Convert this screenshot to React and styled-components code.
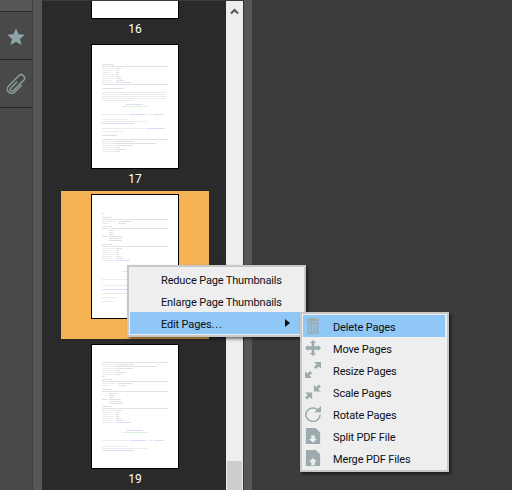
import React from 'react';
import styled, { createGlobalStyle } from 'styled-components';

const GlobalStyle = createGlobalStyle`
  html, body {
    margin: 0;
    height: 100%;
    background: #3c3c3c;
    overflow: hidden;
    font-family: Roboto, "Liberation Sans", Arial, sans-serif;
  }
`;

// rows of a fake page: [x, y, width, colour]
const GREY = '#e0e0e0';
const SOFT = '#ececec';
const RULE = '#e2e2e2';
const LINK = '#dcdcf8';
const GREEN = '#dcf2dc';

const fieldRows = (start, labels, values) =>
  labels.flatMap((w, i) => [
    [10, start + i * 2, w, SOFT],
    [24, start + i * 2, values[i], i === labels.length - 1 ? LINK : GREY],
  ]);

const page17 = [
  [10, 19, 12, GREY], [10, 21, 66, RULE],
  ...fieldRows(23, [13, 12, 8, 13, 14, 12, 10, 12], [5, 3, 3, 3, 5, 6, 8, 15]),
  [10, 39, 66, RULE], [10, 43, 22, GREY],
  [10, 47, 64, SOFT], [10, 49, 64, SOFT], [10, 51, 65, SOFT], [10, 53, 64, SOFT], [10, 55, 32, SOFT],
  [34, 59, 14, LINK], [48, 59, 3, GREY], [30, 61, 26, GREEN],
  [10, 69, 26, SOFT], [37, 69, 17, LINK], [56, 69, 4, SOFT], [61, 69, 11, LINK],
  [10, 74, 25, SOFT], [10, 76, 45, SOFT], [10, 78, 32, LINK],
  [10, 83, 42, SOFT], [53, 83, 20, LINK], [10, 86, 21, SOFT], [10, 90, 15, GREY],
  [10, 94, 66, RULE],
  ...fieldRows(96, [16, 16, 16, 16, 14, 14], [18, 40, 17, 4, 9, 4]),
];

const page18 = [
  [10, 18, 3, GREY], [10, 22, 10, GREY], [10, 24, 66, RULE],
  [10, 26, 14, SOFT], [26, 26, 14, GREY], [10, 28, 7, SOFT], [26, 28, 8, GREY],
  [10, 31, 10, GREY], [10, 33, 66, RULE],
  [17, 35, 5, GREY], [17, 37, 4, GREY], [17, 39, 5, GREY], [10, 41, 5, GREY],
  [17, 41, 13, GREY], [17, 43, 13, GREY], [17, 45, 13, GREY],
  [10, 49, 10, GREY], [10, 51, 66, RULE],
  ...fieldRows(53, [13, 10, 8, 12, 10, 10, 12], [6, 3, 3, 3, 5, 8, 14]),
  [30, 76, 10, GREEN], [10, 84, 30, SOFT], [10, 90, 30, SOFT], [10, 94, 28, LINK],
  [10, 98, 25, SOFT], [10, 102, 15, SOFT], [10, 106, 12, SOFT],
];

const page19 = [
  [10, 17, 66, RULE],
  ...fieldRows(19, [16, 16, 16, 14, 15, 15], [18, 40, 17, 4, 9, 5]),
  [10, 31, 3, GREY], [10, 34, 10, GREY], [10, 36, 66, RULE],
  [10, 38, 14, SOFT], [26, 38, 14, GREY], [10, 40, 7, SOFT], [26, 40, 8, GREY],
  [10, 44, 10, GREY], [10, 46, 66, RULE],
  [17, 48, 8, GREY], [17, 50, 6, GREY], [17, 52, 5, GREY], [10, 54, 5, GREY],
  [17, 54, 12, GREY], [17, 56, 13, GREY], [17, 58, 14, GREY],
  [10, 61, 10, GREY], [10, 63, 66, RULE],
  ...fieldRows(65, [13, 10, 8, 12, 10, 10, 12], [6, 3, 3, 3, 5, 8, 15]),
  [34, 85, 14, LINK], [48, 85, 3, GREY], [30, 87, 26, GREEN],
  [10, 95, 26, SOFT], [37, 95, 17, LINK], [56, 95, 4, SOFT], [61, 95, 11, LINK],
  [10, 101, 25, SOFT], [10, 103, 45, SOFT], [10, 105, 32, LINK],
];

const PageLines = ({ rows }) => (
  <svg width="86" height="123" viewBox="0 0 86 123">
    {rows.map(([x, y, w, c], i) => (
      <rect key={i} x={x} y={y} width={w} height="1" fill={c} />
    ))}
  </svg>
);

const Star = () => (
  <svg width="18" height="18" viewBox="0 0 18 18">
    <path d="M9 .5l2.500 5.800 6.200.5-4.700 4.100 1.500 6.100L9 13.700l-5.500 3.300L5 10.900.3 6.800l6.200-.5z" fill="#8fa5a8" />
  </svg>
);

const Clip = () => (
  <svg width="24" height="24" viewBox="0 0 24 24" fill="none" stroke="#8a9a9c" strokeWidth="1.500">
    <g transform="rotate(45 12 12)">
      <path d="M10.500 9v9a1.800 1.800 0 0 0 3.600 0V3.500a3.300 3.300 0 0 0-6.600 0V18a4.300 4.300 0 0 0 8.600 0V8" />
    </g>
  </svg>
);

const ChevronUp = () => (
  <svg width="9" height="7" viewBox="0 0 9 7">
    <path d="M1 5.500l3.500-3.500 3.500 3.500" fill="none" stroke="#555" strokeWidth="2" />
  </svg>
);

const ICON = '#9cabad';

const icons = {
  trash: (
    <g fill={ICON}>
      <rect x="5" y="0" width="8" height="1" />
      <rect x="2" y="1" width="14" height="3" />
      <path d="M3 5h12v14H3z M5 6.500v11h1.500v-11z M8.200 6.500v11h1.600v-11z M11.500 6.500v11H13v-11z" fillRule="evenodd" />
    </g>
  ),
  move: (
    <path
      d="M9 0l3.500 3.500H10.500V7.500H14.500V5.500L18 9.500l-3.500 4v-2H10.500V15.500h2L9 19l-3.500-3.500h2V11.500H3.500v2L0 9.500l3.500-4v2h4V3.500h-2z"
      fill={ICON}
    />
  ),
  resize: (
    <g fill={ICON}>
      <path d="M18 0v8l-2.700-2.700-3 3-2.300-2.300 3-3L10.300 0z" />
      <path d="M0 19v-8l2.700 2.700 3-3 2.300 2.300-3 3L7.700 19z" />
    </g>
  ),
  scale: (
    <g fill={ICON}>
      <path d="M10 9V1l2.700 2.700 3-3L18 3l-3 3L17.700 9z" />
      <path d="M8 10v8l-2.700-2.700-3 3L0 16l3-3L.3 10z" />
    </g>
  ),
  rotate: (
    <g>
      <path d="M14.500 4.500A8 8 0 1 0 17 10.500" fill="none" stroke={ICON} strokeWidth="1.800" />
      <path d="M18 0v7.500h-7.500z" fill={ICON} />
    </g>
  ),
  split: (
    <path
      d="M1 0h11l5 5v14H1z M7 9v4H4.500L9 17.500 13.500 13H11V9z"
      fill={ICON}
      fillRule="evenodd"
    />
  ),
  merge: (
    <path
      d="M1 0h11l5 5v14H1z M7 18v-4H4.500L9 9.500l4.500 4.500H11v4z"
      fill={ICON}
      fillRule="evenodd"
    />
  ),
};

const Shell = styled.div`
  width: 512px;
  height: 490px;
  position: relative;
  display: flex;
  overflow: hidden;
  background: #3c3c3c;
`;

const Sidebar = styled.div`
  width: 33px;
  padding-top: 11px;
  box-sizing: border-box;
  flex: none;
  background: #494949;
  border-right: 1px solid #3d3d3d;
  box-shadow: inset 0 11px 0 #555;
`;

const Tab = styled.div`
  height: 45px;
  padding-top: 2px;
  border-top: 1px solid #2c2c2c;
  display: flex;
  align-items: center;
  justify-content: center;
  svg { display: block; }
`;

const Gutter = styled.div`
  width: ${(p) => p.$w}px;
  flex: none;
  background: #565656;
`;

const Panel = styled.div`
  width: 184px;
  flex: none;
  margin-top: 1px;
  padding-left: 2px;
  box-sizing: border-box;
  background: #2a2a2a;
  overflow: hidden;
  display: flex;
  flex-direction: column;
  align-items: center;
`;

const Thumb = styled.div`
  width: 148px;
  height: 148px;
  flex: none;
  display: flex;
  justify-content: center;
  padding-top: 3px;
  box-sizing: border-box;
  background: #f4b253;
`;

const Sheet = styled.div`
  width: 86px;
  height: ${(p) => p.$h || 123}px;
  background: #fff;
  border: 1px solid #000;
  margin-top: ${(p) => p.$gap || 0}px;
  overflow: hidden;
  flex: none;
  svg { display: block; filter: blur(0.35px); }
`;

const TopSheet = styled(Sheet)`
  border-top: 0;
`;

const Label = styled.div`
  height: ${(p) => p.$h || 22}px;
  line-height: 21px;
  color: #fff;
  font-size: 12px;
  text-align: center;
  flex: none;
`;

const Slot = styled.div`
  display: flex;
  flex-direction: column;
  align-items: center;
  flex: none;
`;

const Scrollbar = styled.div`
  width: 17px;
  flex: none;
  margin-top: 1px;
  background: #eee;
  border-right: 1px solid #333;
  display: flex;
  flex-direction: column;
  align-items: center;
  justify-content: space-between;
`;

const ArrowBox = styled.div`
  height: 21px;
  display: flex;
  align-items: center;
  justify-content: center;
  svg { display: block; }
`;

const ScrollThumb = styled.div`
  width: 15px;
  height: 29px;
  background: #cdcdcd;
`;

const Main = styled.div`
  flex: 1;
  background: #3c3c3c;
`;

const Menu = styled.div`
  position: absolute;
  left: ${(p) => p.$left}px;
  top: ${(p) => p.$top}px;
  width: ${(p) => p.$width}px;
  padding: 1px 2px 1px 1px;
  box-sizing: border-box;
  background: #eee;
  border: 2px solid #c8c8c8;
  box-shadow: 2px 2px 3px rgba(0, 0, 0, 0.55);
  z-index: ${(p) => p.$z || 1};
`;

const Item = styled.div`
  position: relative;
  height: 22px;
  line-height: 25px;
  padding-left: ${(p) => p.$indent}px;
  background: ${(p) => (p.$active ? '#8fc7f6' : 'transparent')};
  color: #0c1018;
  font-size: 11px;
  letter-spacing: -0.15px;
  white-space: nowrap;
`;

const Dots = styled.span`
  letter-spacing: 0.9px;
`;

const IconCell = styled.span`
  position: absolute;
  left: 2px;
  top: 3px;
  width: 16px;
  height: 16px;
  svg { display: block; }
`;

const Caret = styled.span`
  position: absolute;
  right: 12px;
  top: 7px;
  width: 0;
  height: 0;
  border-left: 5px solid #111;
  border-top: 4px solid transparent;
  border-bottom: 4px solid transparent;
`;

const SubEntry = ({ icon, active, children }) => (
  <Item $indent={30} $active={active}>
    <IconCell>
      <svg width="16" height="16" viewBox="0 0 18 19" preserveAspectRatio="none">{icons[icon]}</svg>
    </IconCell>
    {children}
  </Item>
);

export default function App() {
  return (
    <Shell>
      <GlobalStyle />
      <Sidebar>
        <Tab><Star /></Tab>
        <Tab><Clip /></Tab>
        <Tab />
      </Sidebar>
      <Gutter $w={9} />
      <Panel>
        <Slot>
          <TopSheet $h={17} />
          <Label $h={25}>16</Label>
        </Slot>
        <Slot>
          <Sheet><PageLines rows={page17} /></Sheet>
          <Label>17</Label>
        </Slot>
        <Thumb>
          <Sheet><PageLines rows={page18} /></Sheet>
        </Thumb>
        <Slot>
          <Sheet $gap={5}><PageLines rows={page19} /></Sheet>
          <Label>19</Label>
        </Slot>
      </Panel>
      <Scrollbar>
        <ArrowBox><ChevronUp /></ArrowBox>
        <ScrollThumb />
      </Scrollbar>
      <Gutter $w={8} />
      <Main />

      <Menu $left={127} $top={265} $width={179}>
        <Item $indent={31}>Reduce Page Thumbnails</Item>
        <Item $indent={31}>Enlarge Page Thumbnails</Item>
        <Item $indent={31} $active>
          Edit Pages<Dots>...</Dots>
          <Caret />
        </Item>
      </Menu>
      <Menu $left={300} $top={312} $width={149} $z={2}>
        <SubEntry icon="trash" active>Delete Pages</SubEntry>
        <SubEntry icon="move">Move Pages</SubEntry>
        <SubEntry icon="resize">Resize Pages</SubEntry>
        <SubEntry icon="scale">Scale Pages</SubEntry>
        <SubEntry icon="rotate">Rotate Pages</SubEntry>
        <SubEntry icon="split">Split PDF File</SubEntry>
        <SubEntry icon="merge">Merge PDF Files</SubEntry>
      </Menu>
    </Shell>
  );
}
